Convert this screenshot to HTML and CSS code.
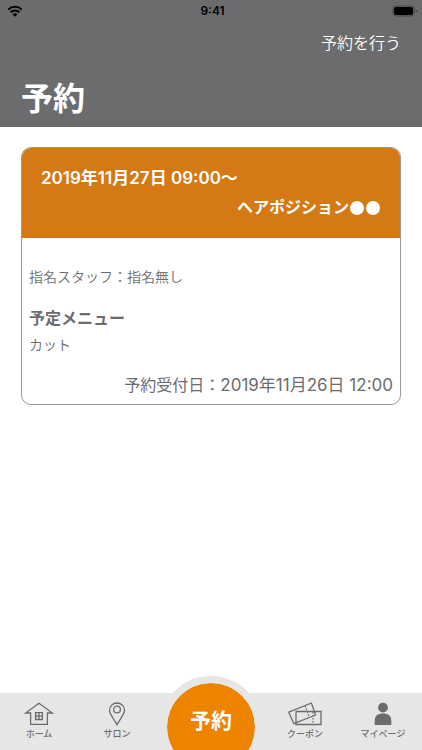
FILE: index.html
```html
<!DOCTYPE html>
<html lang="ja">
<head>
<meta charset="utf-8">
<meta name="viewport" content="width=device-width, initial-scale=1">
<title>予約</title>
<link rel="stylesheet" href="styles.css">
</head>
<body>
<div class="app">
  <header class="header">
    <div class="status">
      <svg class="wifi" viewBox="0 0 16 12" aria-hidden="true">
        <path d="M1.2 4.6a9.7 9.7 0 0 1 13.6 0M3.6 7.2a6.3 6.3 0 0 1 8.8 0"/>
        <path class="solid" d="M5.6 9.3a3.5 3.5 0 0 1 4.8 0L8 11.7z"/>
      </svg>
      <span class="clock">9:41</span>
      <svg class="battery" viewBox="0 0 26 12" aria-hidden="true">
        <rect class="shell" x="1" y="1" width="21" height="10" rx="3"/>
        <rect x="2" y="2" width="19" height="8" rx="2"/>
        <path class="cap" d="M23.5 4.2q1.5.5 1.5 1.8t-1.5 1.8z"/>
      </svg>
    </div>
    <a class="book" href="#book">予約を行う</a>
    <h1 class="title">予約</h1>
  </header>

  <main class="main">
    <article class="card">
      <div class="card-head">
        <p class="date">2019年11月27日 09:00〜</p>
        <p class="salon">ヘアポジション<span class="dot"></span><span class="dot"></span></p>
      </div>
      <div class="card-body">
        <p class="staff">指名スタッフ：指名無し</p>
        <h2 class="menu-title">予定メニュー</h2>
        <p class="menu-item">カット</p>
        <p class="received">予約受付日：<time class="date" datetime="2019-11-26T12:00">2019年11月26日 12:00</time></p>
      </div>
    </article>
  </main>

  <nav class="nav">
    <a class="tab" href="#home">
      <svg class="icon" viewBox="0 0 34 24" aria-hidden="true">
        <path d="M17 1.2 3.6 11h5v11.3h16.8V11h5z"/>
        <path d="M13.6 10.7h6.8v6.8h-6.8zM17 10.7v6.8M13.6 14.1h6.8"/>
      </svg>
      <span>ホーム</span>
    </a>
    <a class="tab" href="#salon">
      <svg class="icon" viewBox="0 0 34 24" aria-hidden="true">
        <path d="M17 22.7C14.5 17.5 9.5 12.5 9.5 8.3a7.5 7.3 0 0 1 15 0c0 4.2-5 9.2-7.5 14.4z"/>
        <circle cx="17" cy="7.5" r="3.4"/>
      </svg>
      <span>サロン</span>
    </a>
    <div class="center"><a class="reserve" href="#reserve" aria-current="page">予約</a></div>
    <a class="tab" href="#coupon">
      <svg class="icon" viewBox="0 0 34 24" aria-hidden="true">
        <path d="M.8 10.2 23.4 1l4.2 12L5.8 21.7z"/>
        <path d="M8 9.5h25v13H8z"/>
        <path class="perforation" d="m17.2 3.8 4.2 12M25 10v12"/>
      </svg>
      <span>クーポン</span>
    </a>
    <a class="tab" href="#mypage">
      <svg class="icon filled" viewBox="0 0 34 24" aria-hidden="true">
        <circle cx="17" cy="5.6" r="4.9"/>
        <path d="M8.7 23v-4.5c0-4.6 3-7 8.3-7s8.3 2.4 8.3 7V23z"/>
      </svg>
      <span>マイページ</span>
    </a>
  </nav>
</div>
</body>
</html>
```
FILE: styles.css
```css
* {
  box-sizing: border-box;
}

body {
  margin: 0;
  background: #fff;
  color: #6c6c6e;
  font-family: Inter, "Noto Sans CJK JP", sans-serif;
}

h1, h2, p {
  margin: 0;
}

a {
  color: inherit;
  text-decoration: none;
}

.app {
  display: flex;
  flex-direction: column;
  min-height: 100vh;
  overflow: hidden;
}

.header {
  display: flex;
  flex-direction: column;
  background: #6c6c6e;
  color: #fff;
}

.status {
  display: grid;
  grid-template-columns: 1fr auto 1fr;
  align-items: center;
  height: 22px;
  padding: 0 4px 0 7px;
  color: #000;
}

.wifi {
  width: 16px;
  height: 12px;
  fill: none;
  stroke: #000;
  stroke-width: 2;
}

.wifi .solid {
  fill: #000;
  stroke: none;
}

.clock {
  font-size: 12px;
  font-weight: 600;
  line-height: 22px;
}

.battery {
  justify-self: end;
  width: 26px;
  height: 12px;
}

.battery .shell {
  fill: none;
  stroke: #444446;
}

.battery .cap {
  fill: #444446;
}

.book {
  align-self: flex-end;
  margin-right: 21px;
  font-size: 16px;
  font-weight: 350;
  line-height: 43px;
}

.title {
  padding: 6px 21px 0;
  font-size: 32px;
  font-weight: 700;
  line-height: 56px;
}

.main {
  flex: 1;
  padding: 20px 21px;
}

.card {
  overflow: hidden;
  border: 1px solid #98989a;
  border-radius: 10px;
}

.card-head {
  padding: 16px 19px;
  background: #d47914;
  color: #fff;
  font-size: 16px;
  font-weight: 600;
  line-height: 29px;
}

.date {
  font-size: 17px;
}

.salon {
  display: flex;
  justify-content: flex-end;
  align-items: center;
}

.dot {
  width: 14px;
  height: 14px;
  margin: 0 1px;
  border-radius: 50%;
  background: #fff;
}

.card-body {
  padding: 27px 7px 7px;
}

.staff,
.menu-item {
  font-size: 14px;
  font-weight: 350;
  line-height: 24px;
}

.menu-title {
  margin-top: 14px;
  font-size: 16px;
  font-weight: 700;
  line-height: 30px;
}

.received {
  margin-top: 16px;
  font-size: 16px;
  font-weight: 400;
  line-height: 24px;
  text-align: right;
}

.nav {
  display: flex;
  height: 57px;
  background: #e6e6e6;
}

.tab {
  display: flex;
  flex: 1;
  flex-direction: column;
  align-items: center;
  gap: 2px;
  padding-top: 9px;
  font-size: 9px;
  font-weight: 500;
  line-height: 12px;
}

.icon {
  width: 34px;
  height: 24px;
  fill: none;
  stroke: #6c6c6e;
  stroke-width: 1.3;
}

.icon.filled {
  fill: #6c6c6e;
  stroke: none;
}

.icon .perforation {
  stroke-dasharray: 1.5 1.5;
}

.center {
  display: flex;
  justify-content: center;
  align-items: flex-start;
  width: 110px;
}

.reserve {
  display: flex;
  justify-content: center;
  flex: none;
  width: 102px;
  height: 102px;
  margin-top: -17px;
  border: 7px solid #e6e6e6;
  border-radius: 50%;
  background: #ee8300 padding-box;
  color: #fff;
  font-size: 21px;
  font-weight: 700;
  line-height: 76px;
}
```
